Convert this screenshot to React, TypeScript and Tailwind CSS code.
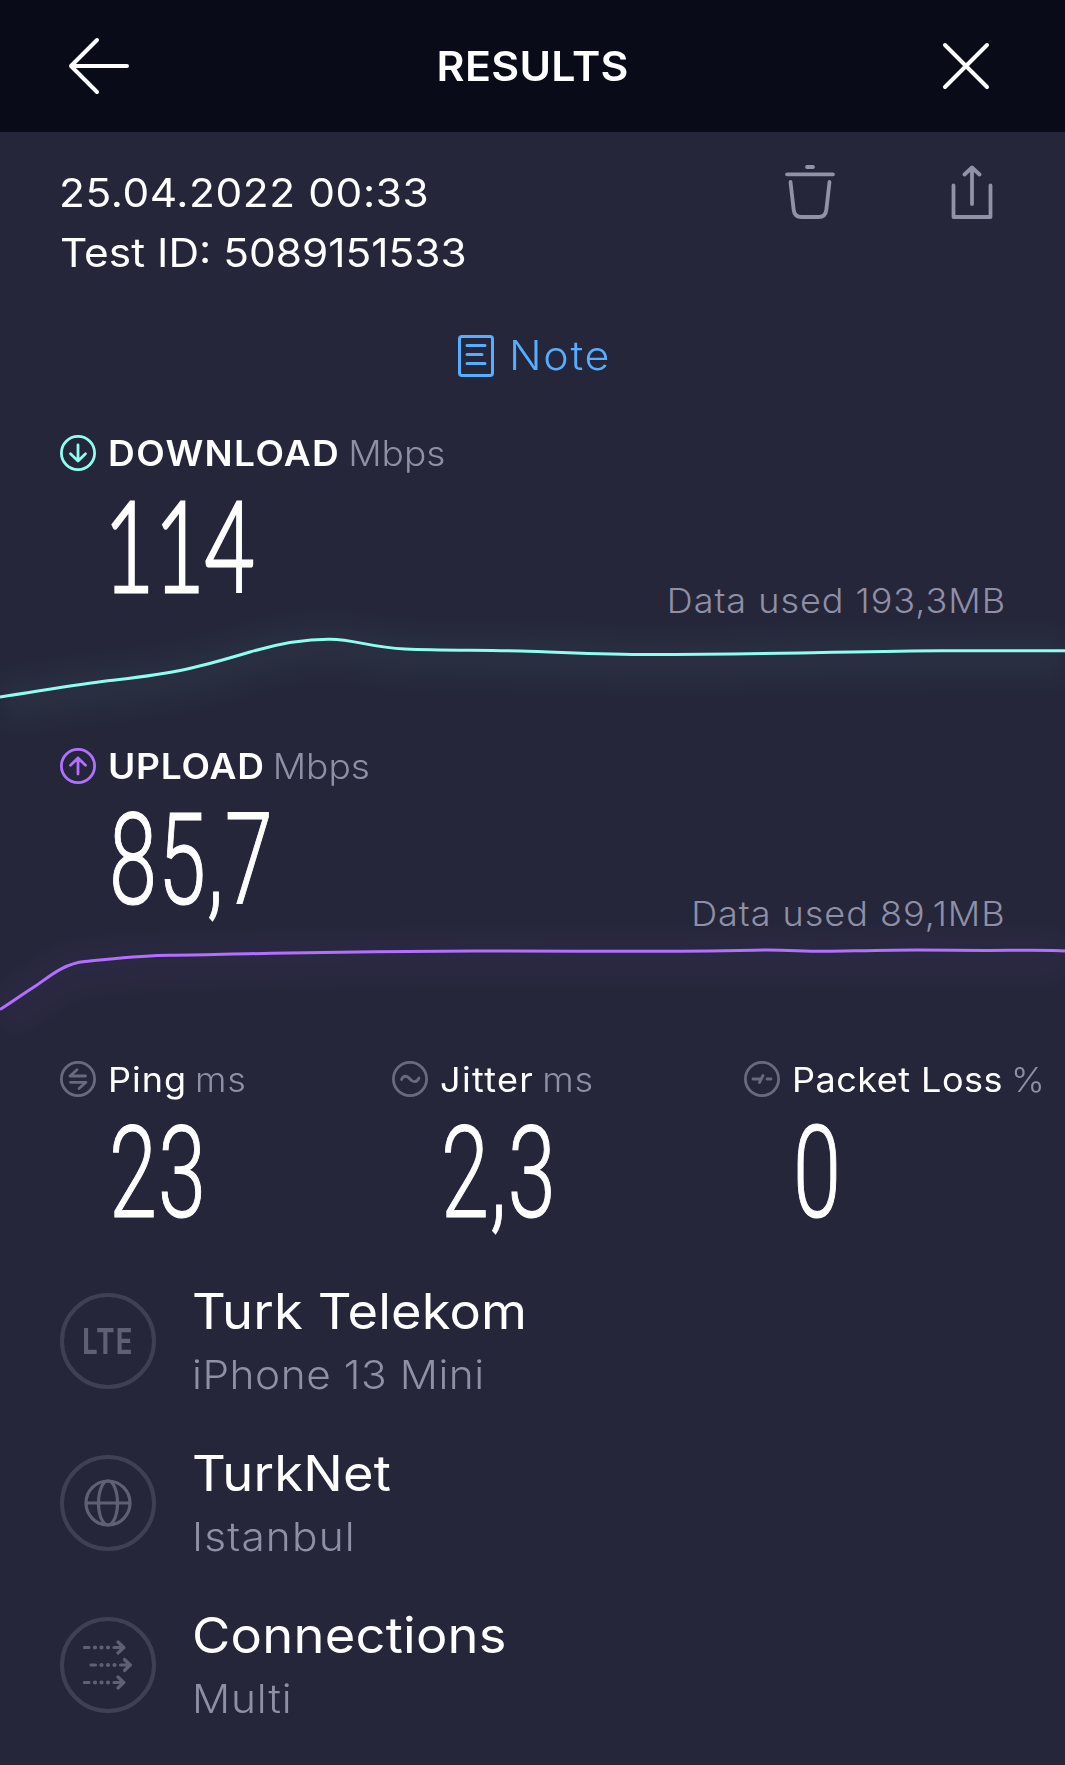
import type { ReactNode } from 'react';

/* Condensed figures; the slab variant gives the figure 1 its foot. */
function BigValue({ children, slab = false }: { children: string; slab?: boolean }) {
  return (
    <span
      className={
        slab
          ? 'block h-[128px] origin-left -translate-x-[4px] scale-x-[0.68] whitespace-nowrap font-[Lato,sans-serif] text-[127px] leading-[121px] font-light tracking-[0.5px] [-webkit-text-stroke:3.2px_#fff]'
          : 'block h-[128px] origin-left translate-x-[1px] scale-x-[0.675] whitespace-nowrap font-[Roboto,sans-serif] text-[128px] leading-[129px] font-light tracking-[1.6px] [-webkit-text-stroke:1.2px_#fff]'
      }
    >
      {children}
    </span>
  );
}

function Ring({ color, children }: { color: string; children: ReactNode }) {
  return (
    <svg width="36" height="36" viewBox="0 0 36 36" fill="none" stroke={color} strokeWidth="2.8" strokeLinecap="round" strokeLinejoin="round" className="shrink-0">
      <circle cx="18" cy="18" r="16.6" />
      {children}
    </svg>
  );
}

function Speed({ icon, label, labelClass, value, slab, used, path, color }: {
  icon: ReactNode; label: string; labelClass: string; value: string; slab?: boolean; used: string; path: string; color: string;
}) {
  return (
    <section>
      <div className="flex h-[60px] items-center pl-[60px]">
        {icon}
        <div className="ml-3 flex origin-left scale-x-[1.06] items-center text-[35px] leading-[40px]">
          <span className={labelClass}>{label}</span>
          <span className="ml-[7.5px] font-[340] text-[#8f8fa6]">Mbps</span>
        </div>
      </div>
      <div className="flex h-[138px] justify-between pr-[60px] pl-[108px]">
        <BigValue slab={slab}>{value}</BigValue>
        <span className="origin-right translate-x-[1px] scale-x-[1.06] self-end text-[34px] leading-[40px] font-[340] tracking-[0.9px] text-[#8f8fa6]">{used}</span>
      </div>
      <svg width="1065" height="115" viewBox="0 0 1065 115" fill="none" className="block overflow-visible">
        <path d={path} stroke={color} strokeWidth="44" opacity="0.04" className="translate-y-[6px] blur-[12px]" />
        <path d={path} stroke={color} strokeWidth="3" />
      </svg>
    </section>
  );
}

function Metric({ icon, label, labelClass, unit, value, className }: {
  icon: ReactNode; label: string; labelClass: string; unit: string; value: string; className: string;
}) {
  return (
    <div className={className}>
      <div className="flex h-[60px] items-center whitespace-nowrap">
        {icon}
        <div className="mt-[2px] ml-3 flex origin-left scale-x-[1.06] items-center text-[34px] leading-[40px]">
          <span className={labelClass}>{label}</span>
          <span className="ml-[7.5px] font-[340] tracking-[0.8px] text-[#8f8fa6]">{unit}</span>
        </div>
      </div>
      <div className="pl-12">
        <BigValue>{value}</BigValue>
      </div>
    </div>
  );
}

function Row({ icon, title, titleClass, sub, subClass }: {
  icon: ReactNode; title: string; titleClass: string; sub: string; subClass: string;
}) {
  return (
    <div className="flex h-[162px] gap-9 pl-[60px]">
      <div className="mt-[13px] flex size-24 shrink-0 items-center justify-center rounded-full border-[4.5px] border-[#404055] text-[#606075]">
        {icon}
      </div>
      <div className="origin-left scale-x-[1.06] whitespace-nowrap">
        <div className={titleClass}>{title}</div>
        <div className={subClass}>{sub}</div>
      </div>
    </div>
  );
}

function Lane({ x, y }: { x: number; y: number }) {
  return (
    <g transform={`translate(${x} ${y})`}>
      <path d="M1.5 0h4.5M31 0h10M35 -5.5l5.7 5.5l-5.7 5.5" />
      <path d="M12 0h.01M18.5 0h.01M25 0h.01" strokeWidth="4.2" />
    </g>
  );
}

export default function App() {
  return (
    <div className="h-[1765px] w-[1065px] overflow-hidden bg-[#25263a] font-[Inter,sans-serif] text-white">
      <header className="flex h-[132px] items-center justify-between bg-[#090b18] pr-[75px] pl-[68px]">
        <svg width="62" height="58" viewBox="0 0 62 58" fill="none" stroke="#fff" strokeWidth="4" strokeLinecap="round" strokeLinejoin="round">
          <path d="M59 29H3M29 3L3 29l26 26" />
        </svg>
        <h1 className="mt-[2px] mr-[7px] scale-x-[1.06] text-[40.5px] leading-[60px] font-[570] tracking-[0.3px]">RESULTS</h1>
        <svg width="48" height="48" viewBox="0 0 48 48" fill="none" stroke="#fff" strokeWidth="4" strokeLinecap="round">
          <path d="M3 3l42 42M45 3L3 45" />
        </svg>
      </header>

      <div className="flex h-[163px] justify-between pt-[30px] pr-[72px] pl-[59px]">
        <div className="mt-px origin-left scale-x-[1.06] text-[40px] leading-[60px] font-[370] whitespace-nowrap">
          <div className="tracking-[0.55px]">25.04.2022 00:33</div>
          <div className="pl-px">Test ID: 5089151533</div>
        </div>
        <div className="flex gap-[116px] pt-[3px] text-[#9291a8]">
          <svg width="50" height="54" viewBox="0 0 50 54" fill="none" stroke="currentColor" strokeWidth="3.8" strokeLinecap="round" strokeLinejoin="round">
            <path d="M22 2h6M2 9.3h46M5.5 17L8.7 45C9.2 49.5 12.2 52 16.5 52H33.5C37.8 52 40.8 49.5 41.3 45L44.5 17" />
          </svg>
          <svg width="42" height="54" viewBox="0 0 42 54" fill="none" stroke="currentColor" strokeWidth="3.8" strokeLinecap="round" strokeLinejoin="round">
            <path d="M2.5 20.5V52H39.5V20.5M21 39V2.5M13.5 9.5L21 2.5l7.5 7" />
          </svg>
        </div>
      </div>

      <div className="flex h-[128px] items-start pt-[31px] pl-[458px] text-[#55aeff]">
        <svg width="36" height="42" viewBox="0 0 36 42" fill="none" stroke="currentColor" strokeWidth="3" strokeLinecap="round" className="mt-[9px]">
          <rect x="1.5" y="1.5" width="33" height="39" rx="2.5" />
          <path d="M9 10.5H27M9 19.5H24M9 28.5H27" />
        </svg>
        <span className="ml-[15px] origin-left scale-x-[1.06] text-[40.5px] leading-[60px] font-[340] tracking-[1.6px]">Note</span>
      </div>

      <Speed
        color="#8cfff0"
        icon={<Ring color="#8cfff0"><path d="M18 10V26M10.5 18.7L18 26l7.5-7.3" /></Ring>}
        label="DOWNLOAD"
        labelClass="font-[570] tracking-[1.27px]"
        value="114"
        slab
        used="Data used 193,3MB"
        path="M0 76C40 70 75 63.5 110 59.5S160 54 185 48.5S225 38.5 250 31S305 18 330 18.2S370 26.5 405 28S480 29 520 30S600 33.5 650 33.5S770 32.5 800 32S900 29.7 940 29.7H1065"
      />
      <Speed
        color="#b36fff"
        icon={<Ring color="#b36fff"><path d="M18 26V10M10.5 17.3L18 10l7.5 7.3" /></Ring>}
        label="UPLOAD"
        labelClass="font-[570] tracking-[0.75px]"
        value="85,7"
        used="Data used 89,1MB"
        path="M0 75.5C12 68 22 60.500 34 53S62 29.500 85 27.500S140 21.500 170 21.300S230 20 272 19.300S430 17 475 17S630 17.500 680 17.300S745 16 768 16S805 17.500 825 17.300S890 16 917 16S960 16.500 985 16.500S1050 15.500 1065 17"
      />

      <div className="flex h-[231px] pl-[60px]">
        <Metric
          className="w-[332px] shrink-0"
          icon={<Ring color="#69697f"><path d="M25.5 15H10l7-6.2M10.5 21.3H26l-7 6.2" /></Ring>}
          label="Ping"
          labelClass="font-[370] tracking-[0.9px]"
          unit="ms"
          value="23"
        />
        <Metric
          className="w-[352px] shrink-0"
          icon={<Ring color="#69697f"><path d="M9.5 18.5C11.5 14 15 14.5 18 18S24.5 22 27 17" /></Ring>}
          label="Jitter"
          labelClass="font-[370] tracking-[1.25px]"
          unit="ms"
          value="2,3"
        />
        <Metric
          className="shrink-0"
          icon={<Ring color="#69697f"><path d="M9 18h4M23 18h4M14 18h2.5M15.5 21.5L19 14.5" /></Ring>}
          label="Packet Loss"
          labelClass="font-[370] tracking-[0.45px]"
          unit="%"
          value="0"
        />
      </div>

      <Row
        icon={<span className="scale-x-[0.78] text-[35px] leading-none font-bold tracking-[1.5px]">LTE</span>}
        title="Turk Telekom"
        titleClass="text-[49.5px] leading-[63px] font-[370] tracking-[0.1px]"
        sub="iPhone 13 Mini"
        subClass="text-[40px] leading-[64px] font-[340] tracking-[0.5px] text-[#8f8fa6]"
      />
      <Row
        icon={
          <svg width="48" height="48" viewBox="0 0 48 48" fill="none" stroke="currentColor" strokeWidth="3.2">
            <circle cx="24" cy="24" r="22" />
            <ellipse cx="24" cy="24" rx="9.5" ry="22" />
            <path d="M2 24h44" />
          </svg>
        }
        title="TurkNet"
        titleClass="text-[49.5px] leading-[63px] font-[370] tracking-[0.2px]"
        sub="Istanbul"
        subClass="text-[40px] leading-[64px] font-[340] tracking-[1.1px] text-[#8f8fa6]"
      />
      <Row
        icon={
          <svg width="50" height="50" viewBox="0 0 50 50" fill="none" stroke="currentColor" strokeWidth="3.2" strokeLinecap="round" strokeLinejoin="round">
            <Lane x={0} y={7.5} />
            <Lane x={6.5} y={25} />
            <Lane x={0} y={42.5} />
          </svg>
        }
        title="Connections"
        titleClass="text-[49.5px] leading-[63px] font-[370] tracking-[0.2px]"
        sub="Multi"
        subClass="text-[40px] leading-[64px] font-[340] tracking-[0.8px] text-[#8f8fa6]"
      />
    </div>
  );
}
